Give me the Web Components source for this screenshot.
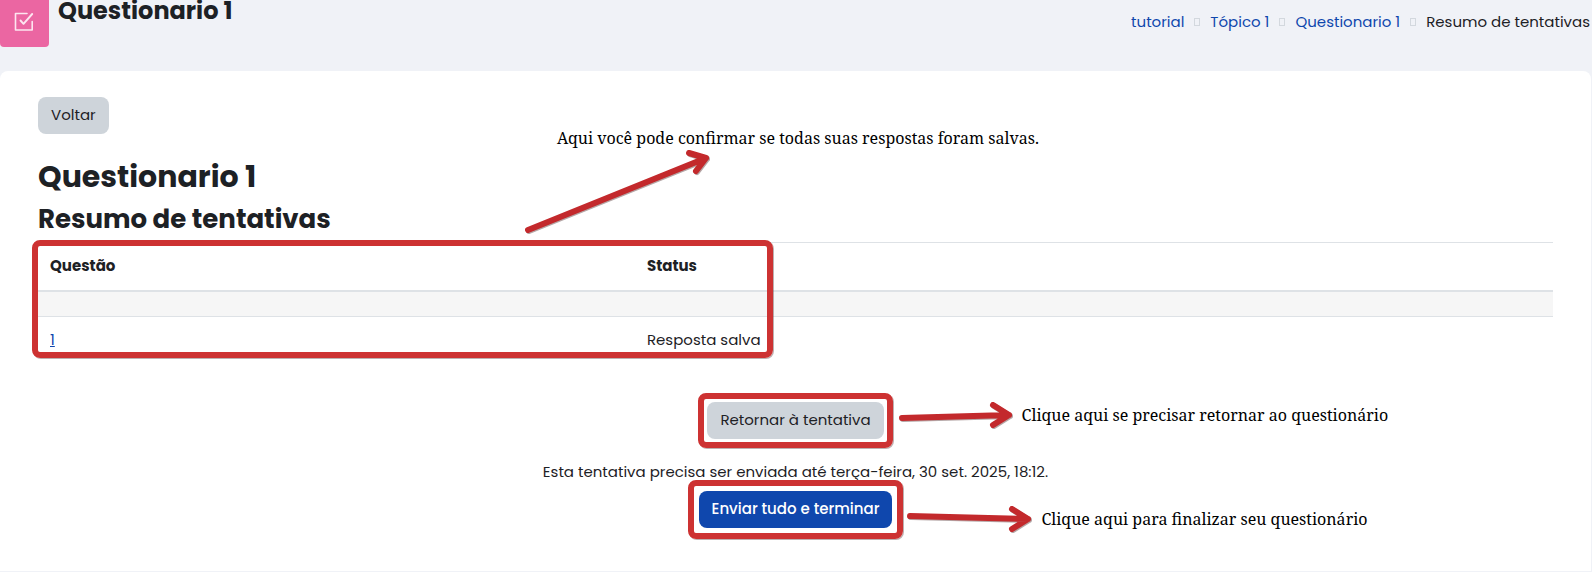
<!DOCTYPE html>
<html lang="pt-BR">
<head>
<meta charset="utf-8">
<title>Questionario 1 - Resumo de tentativas</title>
<style>
body{margin:0;background:#f0f2f7;color:#1d2125;font:15px/24px Poppins,Inter,"Noto Sans",sans-serif}
</style>
</head>
<body>
<quiz-summary-page></quiz-summary-page>
<script>
function define(name, html){
  const tpl=document.createElement('template');
  tpl.innerHTML=html;
  customElements.define(name, class extends HTMLElement{
    constructor(){
      super();
      this.attachShadow({mode:'open'}).append(tpl.content.cloneNode(true));
    }
  });
}

define('activity-icon', `
<style>
:host{display:block;flex:none;width:49px;height:47px;background:#eb66a2;border-radius:0 0 4px 4px}
svg{display:block}
</style>
<svg width="49" height="47" viewBox="0 0 49 47" fill="none" stroke="#fde6f0" stroke-width="1.6" stroke-linecap="round" stroke-linejoin="round" aria-hidden="true">
<path d="M27 13.500H15.500V30H32.200V21.500"/><path stroke-width="1.900" d="M20.500 20.500L23.500 23.800L32.200 14"/>
</svg>`);

define('crumb-trail', `
<style>
:host{display:block;padding-top:10px}
ol{display:flex;flex-wrap:wrap;gap:10px;margin:0;padding:0;list-style:none}
li{display:flex;align-items:center;gap:10px}
li+li::before{content:"";box-sizing:border-box;width:6px;height:8px;border:1px solid #d3d8de}
a{color:#0f47ad;text-decoration:none}
</style>
<nav aria-label="Trilha"><ol>
<li><a href="#tutorial">tutorial</a></li>
<li><a href="#topico">Tópico 1</a></li>
<li><a href="#questionario">Questionario 1</a></li>
<li><span>Resumo de tentativas</span></li>
</ol></nav>`);

define('page-header', `
<style>
:host{display:flex;align-items:flex-start;gap:9px;padding:0 2px 24px 0}
h1{flex:1;margin:0;font-size:24px;line-height:22px;font-weight:700}
</style>
<activity-icon></activity-icon>
<h1><slot></slot></h1>
<crumb-trail></crumb-trail>`);

define('action-button', `
<style>
:host{display:inline-block}
button{display:block;height:37px;padding:0 13px 2px;border:0;border-radius:8px;background:#ced4da;color:#1d2125;font:inherit;white-space:nowrap;cursor:pointer}
:host([primary]) button{background:#0f47ad;color:#fff;font-weight:500}
</style>
<button type="button"><slot></slot></button>`);

define('red-arrow', `
<style>
:host{display:block;flex:none}
svg{display:block;overflow:visible;fill:none;stroke:#c3292c;stroke-width:6px;stroke-linecap:round;stroke-linejoin:round;filter:drop-shadow(1px 1px 0 rgba(90,60,60,.45))}
.up,.down,:host([kind=rise]) .flat,:host([kind=down]) .flat{display:none}
:host([kind=rise]) .up,:host([kind=down]) .down{display:block}
</style>
<svg class="flat" width="114" height="26" viewBox="0 0 114 26" aria-hidden="true"><path d="M3 16L110 13M94 3L110 13L94 23"/></svg>
<svg class="down" width="125" height="26" viewBox="0 0 125 26" aria-hidden="true"><path d="M3 10L121 13M105 3L121 13L105 23"/></svg>
<svg class="up" width="186" height="84" viewBox="0 0 186 84" aria-hidden="true"><path d="M3 79L181 7M164 2L181 7L171 20"/></svg>`);

define('note-text', `
<style>
:host{display:block;color:#000;font:16px/24px "Noto Serif","DejaVu Serif",serif;white-space:nowrap}
</style>
<slot></slot>`);

/* A slotted control with a red outline, and a note pointing away from it. */
define('marked-control', `
<style>
:host{display:block;position:relative;width:max-content;margin:0 auto}
.frame{position:absolute;inset:-9px;border:6px solid #cd3232;border-radius:8px;box-shadow:1px 1px 0 rgba(90,60,60,.4);pointer-events:none}
:host([wide]) .frame{inset:-11px}
.note{position:absolute;left:100%;top:0;display:flex;align-items:center;gap:9px;padding-left:15px}
:host([wide]) .note{padding-top:15px}
</style>
<slot></slot>
<div class="frame"></div>
<div class="note"><slot name="note"></slot></div>`);

define('attempt-table', `
<style>
:host{display:block;position:relative;margin-top:5px}
table{width:100%;table-layout:fixed;border-collapse:separate;border-spacing:0;text-align:left}
.question{width:39.4%}
th{box-sizing:border-box;padding:11px 12px 12px;border-top:1px solid #dee2e6;border-bottom:2px solid #dee2e6;font-weight:700}
td{padding:11px 12px;border-top:1px solid #dee2e6}
.empty td{height:24px;padding:0;border-top:0;background:#f6f6f6}
a{color:#0f47ad}
.frame{position:absolute;left:-6px;top:-2px;bottom:5px;width:48.9%;box-sizing:border-box;border:6px solid #cd3232;border-radius:8px;box-shadow:1px 1px 0 rgba(90,60,60,.4);pointer-events:none}
.note{position:absolute;left:487px;bottom:100%;padding-bottom:7px}
note-text{padding:0 0 1px 32px}
</style>
<table>
<thead><tr><th class="question" scope="col">Questão</th><th scope="col">Status</th></tr></thead>
<tbody>
<tr class="empty"><td colspan="2"></td></tr>
<tr><td><a href="#q1">1</a></td><td>Resposta salva</td></tr>
</tbody>
</table>
<div class="frame"></div>
<div class="note"><note-text>Aqui você pode confirmar se todas suas respostas foram salvas.</note-text><red-arrow kind="rise"></red-arrow></div>`);

define('quiz-summary-page', `
<style>
:host{display:block;overflow:hidden}
main{margin-right:1px;padding:26px 38px 43px;border-radius:8px 8px 0 0;background:#fff}
h2,h3{margin:0;font-weight:700}
h2{margin-top:24px;font-size:30px;line-height:38px}
h3{margin-top:5px;font-size:26px;line-height:36px}
.first{margin-top:39px}
p{margin:21px 0 7px;text-align:center}
action-button{display:block;width:max-content}
</style>
<page-header>Questionario 1</page-header>
<main>
<action-button>Voltar</action-button>
<h2>Questionario 1</h2>
<h3>Resumo de tentativas</h3>
<attempt-table></attempt-table>
<marked-control class="first">
<action-button>Retornar à tentativa</action-button>
<red-arrow slot="note"></red-arrow><note-text slot="note">Clique aqui se precisar retornar ao questionário</note-text>
</marked-control>
<p>Esta tentativa precisa ser enviada até terça-feira, 30 set. 2025, 18:12.</p>
<marked-control wide>
<action-button primary>Enviar tudo e terminar</action-button>
<red-arrow slot="note" kind="down"></red-arrow><note-text slot="note">Clique aqui para finalizar seu questionário</note-text>
</marked-control>
</main>`);
</script>
</body>
</html>
